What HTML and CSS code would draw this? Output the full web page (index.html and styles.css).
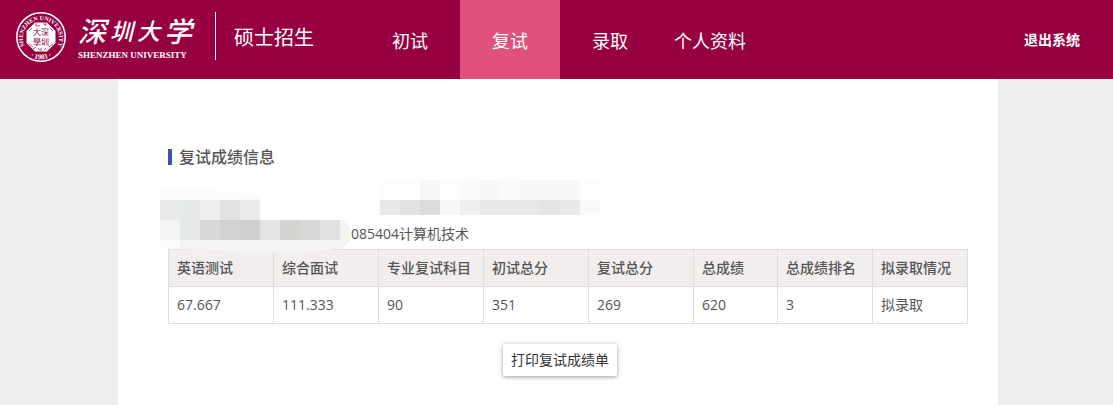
FILE: index.html
```html
<!DOCTYPE html>
<html lang="zh-CN">
<head>
<meta charset="utf-8">
<title>深圳大学硕士招生</title>
<link rel="stylesheet" href="styles.css">
</head>
<body>
<header class="topbar">
  <div class="brand">
    <svg class="seal" viewBox="0 0 50 50" aria-hidden="true">
      <defs>
        <path id="arc-top" d="M9 34.9A18.2 18.2 0 1 1 41 34.9"/>
        <path id="arc-bottom" d="M9 40.500A22.300 22.300 0 0 0 41 40.500"/>
      </defs>
      <circle class="seal-ring" cx="25" cy="25" r="24.2"/>
      <path class="seal-disc" d="M19 10.500h12l8.500 8.500v12L31 39.500H19L10.500 31V19z"/>
      <text class="seal-arc"><textPath href="#arc-top" startOffset="50%" text-anchor="middle">SHENZHEN UNIVERSITY</textPath></text>
      <text class="seal-arc seal-year"><textPath href="#arc-bottom" startOffset="50%" text-anchor="middle">· 1983 ·</textPath></text>
      <path class="seal-mark" d="M20 11v3h4M27 12h4M29 12v2M13 19l3-3M37 19l-3-3M13 32l4 3M17 37l3-2M37 32l-4 3M22 36l2 2M28 38l2-2M25 36v3"/>
      <text class="seal-text" x="25" y="23" text-anchor="middle">大深</text>
      <text class="seal-text" x="25" y="33" text-anchor="middle">學圳</text>
    </svg>
    <div class="wordmark">
      <div class="wordmark-cn"><span class="brush-large">深</span><span>圳</span><span>大</span><span class="brush-large">学</span></div>
      <div class="wordmark-en">SHENZHEN UNIVERSITY</div>
    </div>
    <div class="site-name">硕士招生</div>
  </div>
  <nav class="nav">
    <a class="nav-item" href="#first">初试</a>
    <a class="nav-item nav-active" href="#second">复试</a>
    <a class="nav-item" href="#admit">录取</a>
    <a class="nav-item" href="#profile">个人资料</a>
  </nav>
  <a class="logout" href="#logout">退出系统</a>
</header>
<div class="page">
  <main class="content">
    <h1 class="title">复试成绩信息</h1>
    <div class="candidate">
      <svg class="mosaic" viewBox="0 0 440 74" shape-rendering="crispEdges" aria-hidden="true">
        <path fill="#f5f4f4" shape-rendering="auto" d="M0 38H172C184 38 191 45 191 54C191 63 185 69 176 69C150 73 90 74 57 70L0 69Z"/>
        <path fill="#fbfbfb" d="M0 60h20v9H0zM0 10L40 9 100 16v4H0z"/>
        <path fill="#e9e9e9" d="M0 20h20v20H0z"/>
        <path fill="#e5e9e8" d="M20 20h20v40H20z"/>
        <path fill="#eeeeee" d="M40 20h20v20H40z"/>
        <path fill="#e2e2e2" d="M60 20h20v20H60z"/>
        <path fill="#ebebeb" d="M80 20h20v20H80z"/>
        <path fill="#fff" d="M100 20h80v20h-80z"/>
        <path fill="#f4f4f2" d="M0 40h20v20H0z"/>
        <path fill="#d7d7d7" d="M40 40h20v20H40z"/>
        <path fill="#d2d2d0" d="M60 40h20v20H60z"/>
        <path fill="#cfcfcf" d="M80 40h20v20H80z"/>
        <path fill="#e4e4e4" d="M100 40h20v20h-20z"/>
        <path fill="#d4d4d1" d="M120 40h20v20h-20z"/>
        <path fill="#d8d8d8" d="M140 40h20v20h-20z"/>
        <path fill="#e0e0e0" d="M160 40h20v20h-20z"/>
        <path fill="#fdfdfd" d="M220 0h40v20h-40zM420 0h20v20h-20z"/>
        <path fill="#f6f6f6" d="M260 0h20v20h-20z"/>
        <path fill="#fcfefd" d="M280 0h20v20h-20z"/>
        <path fill="#fafafa" d="M300 0h20v20h-20z"/>
        <path fill="#f8f8f8" d="M320 0h20v20h-20zM360 0h60v20h-60z"/>
        <path fill="#f8fbfa" d="M340 0h20v20h-20z"/>
        <path fill="#e8e8e8" d="M220 20h20v15h-20zM320 20h80v15h-80z"/>
        <path fill="#e2e2e0" d="M240 20h20v15h-20z"/>
        <path fill="#dadcdb" d="M260 20h20v15h-20z"/>
        <path fill="#f6f8f7" d="M280 20h20v15h-20z"/>
        <path fill="#efefed" d="M300 20h20v15h-20z"/>
        <path fill="#e4e4e4" d="M380 20h20v15h-20z"/>
        <path fill="#e8e8e6" d="M400 20h20v15h-20z"/>
        <path fill="#f9f9f9" d="M420 20h20v15h-20z"/>
      </svg>
      <p class="major">085404计算机技术</p>
    </div>
    <table class="scores">
      <colgroup><col class="c-score" span="5"><col class="c-total"><col class="c-rank" span="2"></colgroup>
      <thead>
        <tr><th>英语测试</th><th>综合面试</th><th>专业复试科目</th><th>初试总分</th><th>复试总分</th><th>总成绩</th><th>总成绩排名</th><th>拟录取情况</th></tr>
      </thead>
      <tbody>
        <tr><td>67.667</td><td>111.333</td><td>90</td><td>351</td><td>269</td><td>620</td><td>3</td><td>拟录取</td></tr>
      </tbody>
    </table>
    <div class="actions"><button class="print" type="button">打印复试成绩单</button></div>
  </main>
</div>
</body>
</html>
```
FILE: styles.css
```css
* { box-sizing: border-box; }

body {
  margin: 0;
  min-height: 100vh;
  display: flex;
  flex-direction: column;
  background: #eee;
  color: #555;
  font: 14px/20px "Open Sans", "Noto Sans CJK SC", sans-serif;
}

.topbar {
  display: flex;
  align-items: stretch;
  height: 79px;
  padding-right: 33px;
  background: #960040;
  color: #fff;
}

.topbar a { color: #fff; text-decoration: none; }

.brand {
  display: flex;
  align-items: flex-start;
  width: 360px;
  padding: 12px 0 0 16px;
}

.seal { width: 50px; height: 50px; flex: none; }
.seal-ring { fill: none; stroke: #fff; stroke-width: 1.5; }
.seal-disc { fill: #fff; }
.seal-arc { fill: #fff; font: bold 6px "Liberation Serif", serif; }
.seal-year { font-size: 7px; }
.seal-mark { fill: none; stroke: #960040; stroke-width: 0.7; }
.seal-text { fill: #960040; font: 8px "Noto Sans CJK SC", sans-serif; }

.wordmark { width: 114px; margin-left: 12px; }

.wordmark-cn {
  display: flex;
  justify-content: space-between;
  font: italic 500 23px/36px "Noto Sans CJK SC", sans-serif;
}

.brush-large { font-size: 28px; }

.wordmark-en {
  font: bold 9px/14px "Liberation Serif", serif;
  white-space: nowrap;
}

.site-name {
  height: 48px;
  margin-left: 23px;
  padding-left: 18px;
  border-left: 1px solid #fff;
  font-size: 20px;
  line-height: 52px;
}

.nav { display: flex; }

.nav-item {
  width: 100px;
  padding-top: 4px;
  font-size: 18px;
  line-height: 75px;
  text-align: center;
}

.nav-active { background: #e0527c; }

.logout {
  margin-left: auto;
  font-size: 14px;
  font-weight: bold;
  line-height: 79px;
}

.page {
  flex: 1;
  display: flex;
  padding: 0 115px 0 118px;
}

.content {
  flex: 1;
  padding: 70px 30px 28px 50px;
  background: #fff;
}

.title {
  margin: 0;
  padding-left: 7px;
  border-left: 4px solid #3f51b5;
  font-size: 16px;
  line-height: 16px;
  font-weight: 500;
}

.candidate {
  position: relative;
  padding: 59px 0 5px 183px;
}

.mosaic {
  position: absolute;
  left: -8px;
  top: 15px;
  width: 440px;
  height: 74px;
}

.major { margin: 0; }

.scores {
  width: 100%;
  border-collapse: collapse;
  table-layout: fixed;
}

.c-score { width: 105px; }
.c-total { width: 84px; }
.c-rank { width: 95px; }

.scores th,
.scores td {
  height: 37px;
  padding: 0 8px;
  border: 1px solid #ddd;
  text-align: left;
  white-space: nowrap;
}

.scores th { background: #f2eeee; font-weight: 500; }

.actions {
  display: flex;
  justify-content: center;
  padding: 20px 16px 0 0;
}

.print {
  padding: 6px 8px;
  border: 0;
  border-radius: 2px;
  background: #fff;
  box-shadow: 0 1px 4px rgba(0, 0, 0, 0.4);
  color: #333;
  font: inherit;
}
```
